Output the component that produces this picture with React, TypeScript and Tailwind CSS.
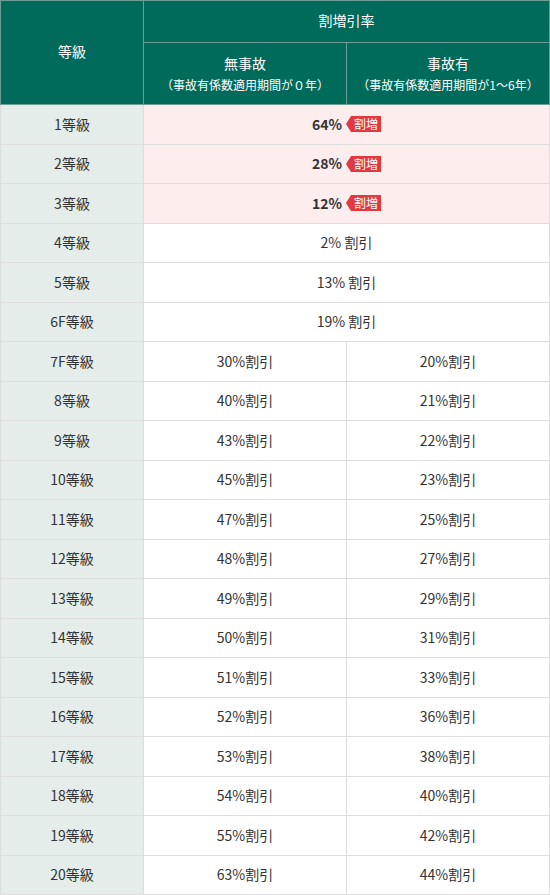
import React from 'react';

const font = { fontFamily: '"Noto Sans CJK JP", "Noto Sans", sans-serif' };

const surcharge = [
  { grade: '1等級', rate: '64%' },
  { grade: '2等級', rate: '28%' },
  { grade: '3等級', rate: '12%' },
];

const single = [
  { grade: '4等級', rate: '2% 割引' },
  { grade: '5等級', rate: '13% 割引' },
  { grade: '6F等級', rate: '19% 割引' },
];

const split = [
  ['7F等級', '30%割引', '20%割引'],
  ['8等級', '40%割引', '21%割引'],
  ['9等級', '43%割引', '22%割引'],
  ['10等級', '45%割引', '23%割引'],
  ['11等級', '47%割引', '25%割引'],
  ['12等級', '48%割引', '27%割引'],
  ['13等級', '49%割引', '29%割引'],
  ['14等級', '50%割引', '31%割引'],
  ['15等級', '51%割引', '33%割引'],
  ['16等級', '52%割引', '36%割引'],
  ['17等級', '53%割引', '38%割引'],
  ['18等級', '54%割引', '40%割引'],
  ['19等級', '55%割引', '42%割引'],
  ['20等級', '63%割引', '44%割引'],
];

function Badge() {
  return (
    <span className="relative ml-[9px] inline-flex h-[16px] items-center bg-[#e2383f] px-[3px] text-[12px] leading-none text-white">
      <span className="absolute left-[-5px] top-0 h-0 w-0 border-y-[8px] border-r-[5px] border-y-transparent border-r-[#e2383f]" />
      割増
    </span>
  );
}

export default function App() {
  const gradeCell = 'border border-[#dddddd] bg-[#e4edea] text-center';
  const cell = 'border border-[#dddddd] text-center';
  return (
    <div className="w-[550px] bg-white text-[14px] text-[#333333]" style={font}>
      <table className="w-full table-fixed border-collapse">
        <colgroup>
          <col className="w-[143px]" />
          <col className="w-[203px]" />
          <col />
        </colgroup>
        <thead className="bg-[#006a5b] text-white">
          <tr className="h-[42px]">
            <th rowSpan={2} className="border border-[#6d9e95] pb-[3px] font-normal">
              等級
            </th>
            <th colSpan={2} className="border border-[#6d9e95] pb-[2px] font-normal">
              割増引率
            </th>
          </tr>
          <tr className="h-[62px]">
            <th className="border border-[#6d9e95] font-normal leading-[22px]">
              <div>無事故</div>
              <div className="text-[12px]">（事故有係数適用期間が０年）</div>
            </th>
            <th className="border border-[#6d9e95] font-normal leading-[22px]">
              <div>事故有</div>
              <div className="text-[12px]">（事故有係数適用期間が1～6年）</div>
            </th>
          </tr>
        </thead>
        <tbody>
          {surcharge.map((r) => (
            <tr key={r.grade} className="h-[39.5px]">
              <td className={gradeCell}>{r.grade}</td>
              <td colSpan={2} className={`${cell} bg-[#fdeded]`}>
                <span className="inline-flex items-center">
                  <span className="font-bold">{r.rate}</span>
                  <Badge />
                </span>
              </td>
            </tr>
          ))}
          {single.map((r) => (
            <tr key={r.grade} className="h-[39.5px]">
              <td className={gradeCell}>{r.grade}</td>
              <td colSpan={2} className={cell}>
                {r.rate}
              </td>
            </tr>
          ))}
          {split.map(([g, a, b]) => (
            <tr key={g} className="h-[39.5px]">
              <td className={gradeCell}>{g}</td>
              <td className={cell}>{a}</td>
              <td className={cell}>{b}</td>
            </tr>
          ))}
        </tbody>
      </table>
    </div>
  );
}
